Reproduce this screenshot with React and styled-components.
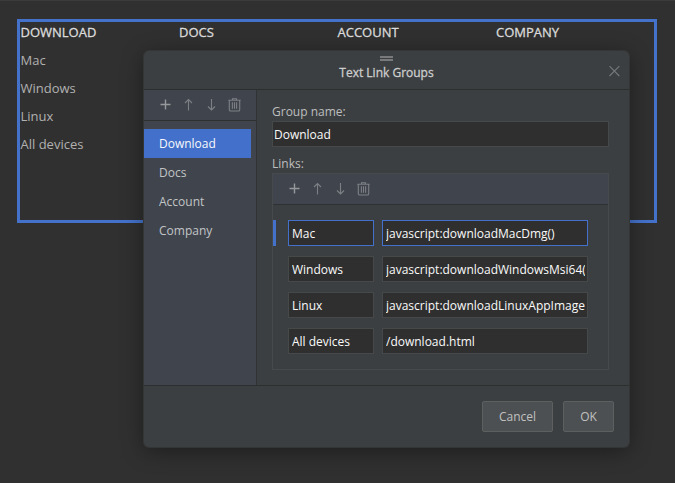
import React from "react";
import styled, { createGlobalStyle, css } from "styled-components";

const GlobalStyle = createGlobalStyle`
  *, *::before, *::after { box-sizing: border-box; }
  body {
    margin: 0;
    background: #303030;
    font-family: "Open Sans", "Noto Sans", sans-serif;
    font-size: 12px;
    color: #bbbbbb;
  }
`;

const Page = styled.main`
  position: relative;
  width: 675px;
  height: 483px;
  overflow: hidden;
  padding: 18px 0 0 17px;
  border-top: 1px solid #3a3b3b;
  background: #303030;
`;

const LinkBlock = styled.section`
  display: grid;
  grid-template-columns: repeat(4, 158.5px);
  width: 640px;
  height: 204px;
  border: 3px solid #4472cb;
`;

const LinkColumn = styled.div`
  padding-left: 0.5px;
`;

const ColumnTitle = styled.h2`
  margin: -2px 0 0;
  font-size: 13px;
  font-weight: 400;
  line-height: 24px;
  color: #dcdcdc;
  -webkit-text-stroke: 0.3px #dcdcdc;
`;

const PageLinks = styled.div`
  padding-top: 2px;
`;

const PageLink = styled.div`
  height: 28px;
  line-height: 28px;
  font-size: 13px;
  color: #b0b0b0;
`;

const Dialog = styled.div`
  position: absolute;
  left: 144px;
  top: 50px;
  display: flex;
  flex-direction: column;
  width: 485px;
  height: 396px;
  border-radius: 5px;
  background: #3c3f41;
  box-shadow: 0 0 0 1px #343535, 0 4px 22px rgba(0, 0, 0, 0.4);
`;

const DialogHeader = styled.header`
  position: relative;
  height: 39px;
  border-bottom: 1px solid #2d2e2e;
  text-align: center;
`;

const Grip = styled.div`
  width: 13px;
  height: 5px;
  margin: 5px auto 0;
  border: solid #77797a;
  border-width: 2px 0;
`;

const DialogTitle = styled.h1`
  margin: 3px 0 0;
  font-size: 12px;
  font-weight: 400;
  line-height: 18px;
  color: #cccdcd;
  -webkit-text-stroke: 0.3px #cccdcd;
`;

const CloseButton = styled.button`
  position: absolute;
  top: 15px;
  right: 9px;
  display: flex;
  padding: 0;
  border: 0;
  background: none;
  color: #76797a;
`;

const DialogBody = styled.div`
  display: flex;
  height: 295px;
`;

const Sidebar = styled.nav`
  width: 113px;
  border-right: 1px solid #303234;
  background: #40444d;
`;

const Toolbar = styled.div`
  display: flex;
  align-items: center;
  gap: 9px;
  height: 31px;
  padding-left: 14px;
  border-bottom: 1px solid #2e3032;
  background: #40444d;
`;

const ToolButton = styled.button`
  display: flex;
  padding: 0;
  border: 0;
  background: none;
  color: ${(p) => (p.$bright ? "#96999c" : "#7c8085")};
`;

const GroupList = styled.div`
  padding: 8px 5px 0 0;
`;

const GroupItem = styled.div`
  height: 29px;
  padding-left: 15px;
  line-height: 29px;
  color: ${(p) => (p.$selected ? "#f8f9fb" : "#c2c4c6")};
  background: ${(p) => (p.$selected ? "#4270ca" : "transparent")};
`;

const Details = styled.div`
  width: 337px;
  margin-left: 15px;
  padding-top: 12px;
`;

const FieldLabel = styled.label`
  display: block;
  height: 19px;
  line-height: 20px;
  color: #bcbebf;
`;

const TextField = styled.input`
  display: block;
  min-width: 0;
  width: ${(p) => p.$width}px;
  height: 26px;
  padding: 0 2px 0 ${(p) => p.$inset ?? 3}px;
  border: 1px solid #46494a;
  border-radius: 0;
  outline: 0;
  background: #2f2f2f;
  color: #fafafa;
  font: inherit;
  ${(p) =>
    p.$active &&
    css`
      border-color: #4270ca;
    `}
`;

const LinksLabel = styled(FieldLabel)`
  margin-top: 7px;
`;

const LinksPanel = styled.div`
  height: 197px;
  border: 1px solid #464a4c;
`;

const LinkRows = styled.div`
  display: grid;
  gap: 10px;
  padding-top: 15px;
`;

const LinkRow = styled.div`
  display: flex;
  gap: 8px;
  height: 26px;
  padding-left: 12px;
  border-left: 3px solid ${(p) => (p.$active ? "#4472cb" : "transparent")};
`;

const DialogFooter = styled.footer`
  display: flex;
  justify-content: flex-end;
  gap: 10px;
  height: 62px;
  padding: 15px 15px 0 0;
  border-top: 1px solid #2e3030;
`;

const DialogButton = styled.button`
  width: ${(p) => p.$width}px;
  height: 31px;
  padding: 0;
  border: 1px solid #5e6060;
  border-radius: 2px;
  background: #4d5052;
  color: #c0c0c0;
  font: inherit;
  line-height: 29px;
`;

function PlusIcon() {
  return (
    <svg width="14" height="14" viewBox="0 0 14 14" fill="none" stroke="currentColor" strokeWidth="1.4">
      <path d="M7.5 1.5v10M2.5 6.5h10" />
    </svg>
  );
}

function ArrowIcon({ down }) {
  return (
    <svg width="14" height="14" viewBox="0 0 14 14" fill="none" stroke="currentColor" strokeWidth="1.1">
      <path d={down ? "M7.5 1v11M4 8.5l3.5 3.5L11 8.5" : "M7.5 12.5V1.5M4 5l3.5-3.5L11 5"} />
    </svg>
  );
}

function TrashIcon() {
  return (
    <svg width="14" height="14" viewBox="0 0 14 14" fill="none" stroke="currentColor" strokeWidth="1.1">
      <path d="M1.3 2.3h12.4M5.5 2.2V.8h4v1.4M2.3 2.5v9.2q0 1.3 1.3 1.3h7.8q1.3 0 1.3-1.3V2.5M5.4 4.3v6.4M7.5 4.3v6.4M9.6 4.3v6.4" />
    </svg>
  );
}

function EditToolbar() {
  return (
    <Toolbar>
      <ToolButton $bright aria-label="Add"><PlusIcon /></ToolButton>
      <ToolButton aria-label="Move up"><ArrowIcon /></ToolButton>
      <ToolButton aria-label="Move down"><ArrowIcon down /></ToolButton>
      <ToolButton aria-label="Delete"><TrashIcon /></ToolButton>
    </Toolbar>
  );
}

const columns = ["DOWNLOAD", "DOCS", "ACCOUNT", "COMPANY"];
const groups = ["Download", "Docs", "Account", "Company"];
const links = [
  ["Mac", "javascript:downloadMacDmg()"],
  ["Windows", "javascript:downloadWindowsMsi64()"],
  ["Linux", "javascript:downloadLinuxAppImage()"],
  ["All devices", "/download.html"],
];

export default function App() {
  return (
    <Page>
      <GlobalStyle />
      <LinkBlock>
        {columns.map((title, i) => (
          <LinkColumn key={title}>
            <ColumnTitle>{title}</ColumnTitle>
            {i === 0 && (
              <PageLinks>
                {links.map(([name]) => (
                  <PageLink key={name}>{name}</PageLink>
                ))}
              </PageLinks>
            )}
          </LinkColumn>
        ))}
      </LinkBlock>
      <Dialog role="dialog">
        <DialogHeader>
          <Grip />
          <DialogTitle>Text Link Groups</DialogTitle>
          <CloseButton aria-label="Close">
            <svg width="11" height="11" viewBox="0 0 11 11" fill="none" stroke="currentColor" strokeWidth="1.1">
              <path d="M.5.2l9.8 9.8M10.3.2L.5 10" />
            </svg>
          </CloseButton>
        </DialogHeader>
        <DialogBody>
          <Sidebar>
            <EditToolbar />
            <GroupList>
              {groups.map((g, i) => (
                <GroupItem key={g} $selected={i === 0}>{g}</GroupItem>
              ))}
            </GroupList>
          </Sidebar>
          <Details>
            <FieldLabel>Group name:</FieldLabel>
            <TextField $width={337} $inset={1} defaultValue="Download" />
            <LinksLabel as="div">Links:</LinksLabel>
            <LinksPanel>
              <EditToolbar />
              <LinkRows>
                {links.map(([name, url], i) => (
                  <LinkRow key={name} $active={i === 0}>
                    <TextField $width={86} $active={i === 0} defaultValue={name} />
                    <TextField $width={206} $active={i === 0} defaultValue={url} />
                  </LinkRow>
                ))}
              </LinkRows>
            </LinksPanel>
          </Details>
        </DialogBody>
        <DialogFooter>
          <DialogButton $width={71}>Cancel</DialogButton>
          <DialogButton $width={51}>OK</DialogButton>
        </DialogFooter>
      </Dialog>
    </Page>
  );
}
